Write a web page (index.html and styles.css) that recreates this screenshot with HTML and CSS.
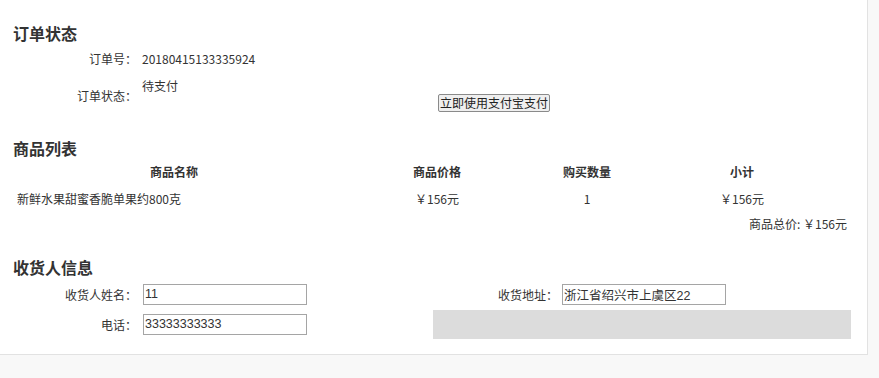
FILE: index.html
```html
<!DOCTYPE html>
<html lang="zh-CN">
<head>
<meta charset="utf-8">
<title>订单详情</title>
<link rel="stylesheet" href="styles.css">
</head>
<body>
<div class="card">
  <h2 class="heading">订单状态</h2>
  <div class="info">
    <div class="label row1">订单号：</div>
    <div class="value row1">20180415133335924</div>
    <div class="label row2">订单状态：</div>
    <div class="value row2">
      <div class="status">待支付</div>
      <div class="pay"><button class="pay-btn" type="button">立即使用支付宝支付</button></div>
    </div>
  </div>

  <h2 class="heading goods-title">商品列表</h2>
  <div class="goods">
    <div class="th">商品名称</div>
    <div class="th">商品价格</div>
    <div class="th">购买数量</div>
    <div class="th">小计</div>
    <div class="td name">新鲜水果甜蜜香脆单果约800克</div>
    <div class="td">￥156元</div>
    <div class="td">1</div>
    <div class="td">￥156元</div>
  </div>
  <div class="total">商品总价: ￥156元</div>

  <h2 class="heading recv-title">收货人信息</h2>
  <div class="recv">
    <div class="label">收货人姓名：</div>
    <div class="field"><input class="input" type="text" value="11"></div>
    <div class="label">收货地址：</div>
    <div class="field"><input class="input" type="text" value="浙江省绍兴市上虞区22"></div>
    <div class="label">电话：</div>
    <div class="field"><input class="input" type="text" value="33333333333"></div>
    <div class="gray"></div>
  </div>
</div>
</body>
</html>
```

FILE: styles.css
```css
html, body {
  margin: 0;
  padding: 0;
  background: #f8f8f8;
}
body {
  font-family: "Noto Sans CJK SC", "Liberation Sans", sans-serif;
  font-size: 12px;
  color: #333;
}
.card {
  width: 868px;
  height: 355px;
  box-sizing: border-box;
  background: #fff;
  border-right: 1px solid #e2e2e2;
  border-bottom: 1px solid #e2e2e2;
  padding: 23px 0 0 13px;
}
.heading {
  margin: 0;
  font-size: 16px;
  line-height: 20px;
  font-weight: bold;
  color: #333;
}
.info {
  display: grid;
  grid-template-columns: 124px 705px;
  margin-top: 6px;
}
.label {
  text-align: right;
  display: flex;
  align-items: center;
  justify-content: flex-end;
}
.row1 {
  height: 20px;
  line-height: 20px;
}
.value.row1 {
  padding-left: 5px;
}
.row2 {
  margin-top: 9px;
}
.label.row2 {
  height: 35px;
}
.value.row2 {
  padding-left: 5px;
}
.status {
  line-height: 16px;
  height: 16px;
}
.pay {
  display: flex;
  justify-content: center;
}
.pay-btn {
  font-family: "Noto Sans CJK SC", sans-serif;
  font-size: 12px;
  height: 18px;
  line-height: 14px;
  padding: 0 1px;
  margin-left: 4px;
  border: 1px solid #8a8a8a;
  border-radius: 2px;
  background: #efefef;
  color: #222;
}
.goods-title {
  margin-top: 25px;
}
.goods {
  display: grid;
  grid-template-columns: 322px 204px 96px 214px;
}
.th, .td {
  height: 27px;
  line-height: 27px;
  text-align: center;
}
.th {
  font-weight: bold;
}
.td.name {
  text-align: left;
  padding-left: 4px;
}
.total {
  width: 834px;
  text-align: right;
  line-height: 20px;
  margin-top: 2px;
}
.recv-title {
  margin-top: 23px;
}
.recv {
  display: grid;
  grid-template-columns: 124px 296px 125px 293px;
  grid-template-rows: 30px 30px;
  margin-top: 2px;
}
.field {
  display: flex;
  align-items: center;
  padding-left: 6px;
}
.field:nth-child(4) {
  padding-left: 4px;
}
.input {
  width: 164px;
  height: 21px;
  box-sizing: border-box;
  border: 1px solid #a5a5a5;
  padding: 0 1px;
  font-family: "Liberation Sans", "Noto Sans CJK SC", sans-serif;
  font-size: 12.5px;
  color: #333;
  margin: 0;
}
.gray {
  grid-column: 3 / 5;
  background: #dcdcdc;
  height: 29px;
  margin-top: 1px;
}
```
